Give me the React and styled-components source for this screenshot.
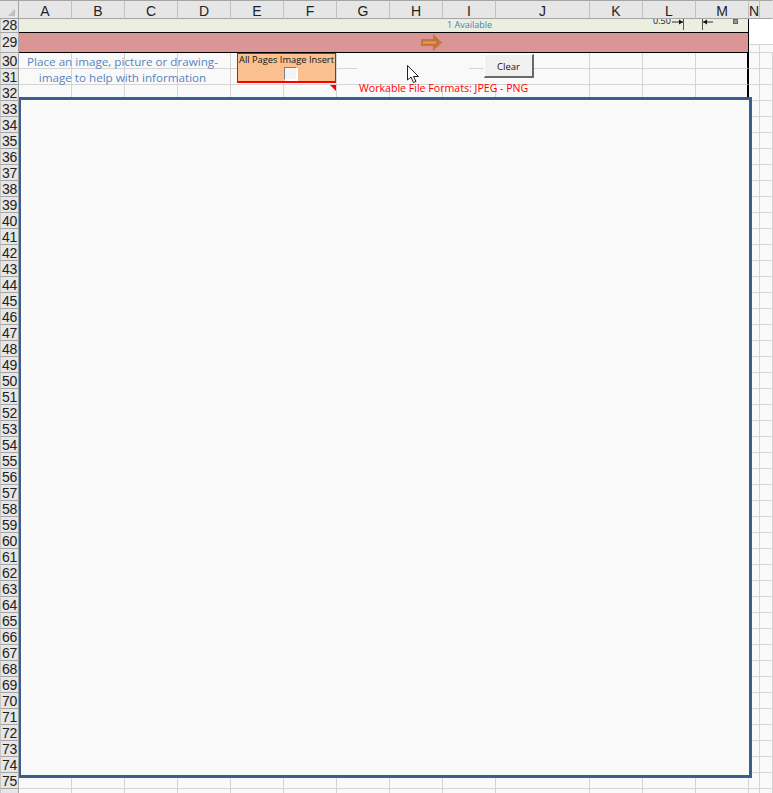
import React from 'react';
import styled, { createGlobalStyle } from 'styled-components';

const GlobalStyle = createGlobalStyle`
  html, body {
    margin: 0;
    padding: 0;
    overflow: hidden;
    background: #f9f9f9;
  }
`;

const COLS = [
  ['A', 53], ['B', 53], ['C', 53], ['D', 53], ['E', 53], ['F', 53], ['G', 53],
  ['H', 53], ['I', 53], ['J', 94], ['K', 53], ['L', 53], ['M', 53], ['N', 11], ['', 13],
];
const FIRST_GRID_ROW = 30;
const LAST_ROW = 76;

const sheetColumns = `19px ${COLS.map(c => c[1] + 'px').join(' ')}`;
const sheetRows = `19px 14px 20px repeat(${LAST_ROW - FIRST_GRID_ROW + 1}, 16px)`;
const bandColumns = COLS.slice(0, 13).map(c => c[1] + 'px').join(' ');

const Sheet = styled.div`
  position: relative;
  width: 773px;
  height: 793px;
  overflow: hidden;
  display: grid;
  grid-template-columns: ${sheetColumns};
  grid-template-rows: ${sheetRows};
  background: #f9f9f9;
`;

// floating shapes sit on a second grid with the same tracks as the cells
const ShapeLayer = styled.div`
  position: absolute;
  inset: 0;
  display: grid;
  grid-template-columns: ${sheetColumns};
  grid-template-rows: ${sheetRows};
`;

const Corner = styled.div`
  box-sizing: border-box;
  background: #e6e6e6;
  border-top: 1px solid #a5a5a5;
  border-bottom: 1px solid #a5a5a5;
  border-right: 1px solid #a5a5a5;
  display: flex;
  align-items: flex-end;
  justify-content: flex-end;
  padding: 0 3px 2px 0;
`;

const ColHead = styled.div`
  box-sizing: border-box;
  background: #e6e6e6;
  border-top: 1px solid #a5a5a5;
  border-bottom: 1px solid #a5a5a5;
  border-right: 1px solid ${p => (p.$open ? '#e6e6e6' : '#c0c0c0')};
  font: 14px/20px "Liberation Sans", Arial, sans-serif;
  color: #222;
  text-align: center;
`;

const RowHead = styled.div`
  box-sizing: border-box;
  background: #e6e6e6;
  border-bottom: 1px solid #a5a5a5;
  border-right: 1px solid #a5a5a5;
  border-left: 1px solid #c8c8c8;
  font: 14px/${p => p.$h}px "Liberation Sans", Arial, sans-serif;
  color: #222;
  text-align: center;
  letter-spacing: -0.3px;
`;

const Cell = styled.div`
  box-sizing: border-box;
  display: flex;
  align-items: flex-end;
  background: #f9f9f9;
  border-right: ${p => (p.$edge ? '2px solid #000' : p.$noRight ? 'none' : '1px solid #d4d4d4')};
  border-bottom: ${p => (p.$noBottom ? 'none' : '1px solid #d4d4d4')};
`;

const Stub = styled.span`
  margin-left: ${p => p.$left}px;
  width: ${p => p.$width}px;
  height: 1px;
  background: #d4d4d4;
`;

const Band = styled.div`
  grid-column: 2 / span 13;
  display: grid;
  grid-template-columns: ${bandColumns};
  grid-template-rows: 1fr;
  overflow: hidden;
  box-sizing: border-box;
  background: ${p => p.$bg};
  border-bottom: 1px solid #000;
  border-right: 1px solid #000;
`;

const Available = styled.div`
  grid-column: 9;
  grid-row: 1;
  margin: -1px 0 0 4px;
  font: 9px/13px "Open Sans", sans-serif;
  color: #4a7ebd;
  white-space: nowrap;
`;

const MarginValue = styled.div`
  grid-column: 12;
  grid-row: 1;
  margin: -4px 0 0 10px;
  font: 9px/12px "Open Sans", sans-serif;
  color: #222;
`;

const Marks = styled.svg`
  grid-column: 12 / span 2;
  grid-row: 1;
  margin-left: 29px;
`;

const BandArrow = styled.svg`
  grid-column: 8;
  grid-row: 1;
  justify-self: end;
`;

const RightGap = styled.div`
  grid-column: 15 / span 2;
  grid-row: 2 / span 2;
  display: flex;
  flex-direction: column;
  box-sizing: border-box;
  background: #f9f9f9;
  border-bottom: 1px solid #d4d4d4;
`;

const RightNote = styled.div`
  box-sizing: border-box;
  height: 26px;
  background: #fff;
  border-bottom: 1px solid #d4d4d4;
`;

const RightTail = styled.div`
  flex: 1;
  box-sizing: border-box;
  width: 11px;
  border-right: 1px solid #d4d4d4;
`;

const HelpText = styled.div`
  grid-column: 2 / span 4;
  grid-row: 4 / span 2;
  padding: 1px 5px 0 0;
  font: 11.65px/16px "Open Sans", sans-serif;
  color: #5585c0;
  text-align: center;
`;

const InsertBox = styled.div`
  grid-column: 6 / span 2;
  grid-row: 4 / span 2;
  align-self: start;
  margin: 0 1px 0 6px;
  height: 30px;
  box-sizing: border-box;
  background: #fac090;
  border: 1px solid #f00;
  border-bottom-width: 2px;
  display: flex;
  flex-direction: column;
  align-items: center;
  font: 9.3px/12px "Open Sans", sans-serif;
  color: #111;
  white-space: nowrap;
`;

const Check = styled.span`
  box-sizing: border-box;
  display: block;
  width: 13px;
  height: 13px;
  margin: 1px 0 0 8px;
  background: #f4f4f4;
  border: 1px solid #fff;
  border-top-color: #808080;
  border-left-color: #808080;
  box-shadow: 1px 1px 0 #fff;
`;

const CommentMark = styled.span`
  grid-column: 7;
  grid-row: 6;
  justify-self: end;
  align-self: start;
  margin-right: 1px;
  width: 0;
  height: 0;
  border-top: 6px solid #f00;
  border-left: 6px solid transparent;
`;

const Formats = styled.div`
  grid-column: 8 / span 4;
  grid-row: 5 / span 2;
  align-self: end;
  margin: 0 0 5px 22px;
  font: 10.6px/16px "Open Sans", sans-serif;
  color: #f00;
  white-space: nowrap;
`;

const ClearButton = styled.button`
  grid-column: 10 / span 2;
  grid-row: 4 / span 2;
  justify-self: start;
  align-self: start;
  margin: 1px 0 0 41px;
  width: 50px;
  height: 24px;
  box-sizing: border-box;
  padding: 2px 0 0;
  background: #f0f0f0;
  border: 2px solid #696969;
  border-top: 1px solid #fff;
  border-left: 1px solid #fff;
  font: 9.5px/18px "Open Sans", sans-serif;
  color: #111;
`;

const Pointer = styled.svg`
  grid-column: 9;
  grid-row: 4 / span 2;
  margin: 11px 0 0 16px;
`;

const ImagePanel = styled.div`
  grid-column: 2 / span 13;
  grid-row: 7 / span 43;
  margin: -4px -3px 11px 0;
  box-sizing: border-box;
  background: #f9f9f9;
  border: 3px solid #3a5f8e;
  border-left-width: 2px;
`;

const rows = [];
for (let r = FIRST_GRID_ROW; r <= LAST_ROW; r++) rows.push(r);

// gridlines hidden behind the floating controls in rows 30 and 31
const cellProps = (r, i) => {
  const inGap = i >= 6 && i <= 8;
  const top = r <= 31;
  return {
    $edge: i === 12 && r <= 32,
    $noRight: top && inGap,
    $noBottom: r === 30 && inGap,
  };
};

export default function App() {
  return (
    <>
      <GlobalStyle />
      <Sheet>
        <Corner>
          <svg width="7" height="7" viewBox="0 0 7 7">
            <path d="M7 0V7H0Z" fill="#c0c0c0" />
          </svg>
        </Corner>
        {COLS.map(([name], i) => (
          <ColHead key={i} $open={i === COLS.length - 1}>{name}</ColHead>
        ))}

        <RowHead $h={13}>28</RowHead>
        <Band $bg="#ebefdf">
          <Available>1 Available</Available>
          <MarginValue>0.50</MarginValue>
          <Marks width="90" height="13" viewBox="0 0 90 13">
            <path d="M0 3H11M30 3H41" stroke="#333" strokeWidth="1" fill="none" />
            <path d="M7 0.5L11 3L7 5.5ZM35 0.5L31 3L35 5.5Z" fill="#111" />
            <path d="M11.5 0V11M30.5 0V11" stroke="#555" strokeWidth="1" fill="none" />
            <rect x="61.5" y="0.5" width="4" height="4" fill="#999" stroke="#666" />
          </Marks>
        </Band>
        <RightGap>
          <RightNote />
          <RightTail />
        </RightGap>

        <RowHead $h={19}>29</RowHead>
        <Band $bg="#da9694">
          <BandArrow width="22" height="19" viewBox="0 0 22 19">
            <path d="M0 6H12V1L21 9.5L12 18V13H0Z" fill="#c0763a" />
            <path d="M2 9.5H15" stroke="#f79646" strokeWidth="2" fill="none" />
          </BandArrow>
        </Band>

        {rows.map(r => (
          <React.Fragment key={r}>
            <RowHead $h={17}>{r < LAST_ROW ? r : ''}</RowHead>
            {COLS.map((c, i) => (
              <Cell key={i} {...cellProps(r, i)}>
                {r === 30 && i === 6 && <Stub $left={0} $width={20} />}
                {r === 30 && i === 8 && <Stub $left={26} $width={27} />}
              </Cell>
            ))}
          </React.Fragment>
        ))}

        <ShapeLayer>
          <HelpText>
            Place an image, picture or drawing-
            <br />
            image to help with information
          </HelpText>
          <InsertBox>
            All Pages Image Insert
            <Check />
          </InsertBox>
          <CommentMark />
          <Formats>Workable File Formats: JPEG - PNG</Formats>
          <ClearButton>Clear</ClearButton>
          <Pointer width="14" height="20" viewBox="0 0 14 20">
            <path d="M1.5 1.5V16L5 13L7.5 18.5L10 17.5L7.5 12.5H12.5Z" fill="#fff" stroke="#222" strokeWidth="1" />
          </Pointer>
          <ImagePanel />
        </ShapeLayer>
      </Sheet>
    </>
  );
}
